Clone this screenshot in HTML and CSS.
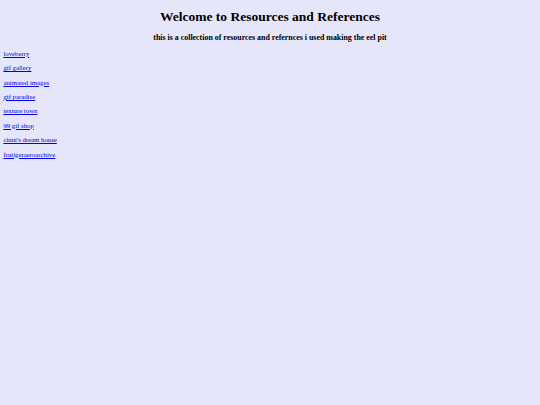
FILE: index.html
```html
<!DOCTYPE html>
<html>
<head>
<meta charset="utf-8">
<title>Resources and References</title>
<link rel="stylesheet" href="styles.css">
</head>
<body class="page">
<h1 class="title">Welcome to Resources and References</h1>
<h3 class="subtitle">this is a collection of resources and refernces i used making the eel pit</h3>
<ul class="links">
<li class="item"><a href="#">loveberry</a></li>
<li class="item"><a href="#">gif gallery</a></li>
<li class="item"><a href="#">animated images</a></li>
<li class="item"><a href="#">gif paradise</a></li>
<li class="item"><a href="#">texture town</a></li>
<li class="item"><a href="#">99 gif shop</a></li>
<li class="item"><a href="#">cinni's dream house</a></li>
<li class="item"><a href="#">frutigeraeroarchive</a></li>
</ul>
</body>
</html>
```
FILE: styles.css
```css
html {
  background: #e6e6fa;
}
.page {
  margin: 0;
  padding: 8.6px 3.4px 0;
  font-family: "Liberation Serif", "Times New Roman", serif;
  color: #000;
}
.title {
  text-align: center;
  font-size: 13.5px;
  line-height: 15px;
  margin: 0;
}
.subtitle {
  text-align: center;
  font-size: 7.92px;
  line-height: 9px;
  margin: 9.8px 0 0;
}
.links {
  list-style: none;
  margin: 7.4px 0 0;
  padding: 0;
  display: flex;
  flex-direction: column;
  gap: 6.4px;
}
.item {
  font-size: 6.77px;
  line-height: 8px;
}
.item a {
  color: #0000ee;
}
```
